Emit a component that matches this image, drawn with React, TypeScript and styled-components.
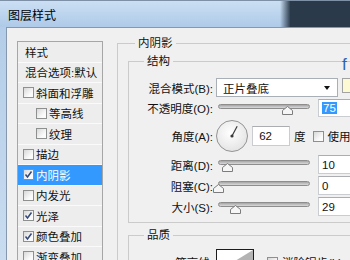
import React from 'react';
import styled, { createGlobalStyle } from 'styled-components';

const Global = createGlobalStyle`
  html, body { margin:0; padding:0; background:#f0f0f0; }
  body {
    font-family: "Liberation Sans", "Noto Sans CJK SC", sans-serif;
    font-size:11.5px; color:#111;
  }
`;

const Win = styled.div`
  width:350px; height:260px; overflow:hidden; background:#f0f0f0;
  display:flex; flex-direction:column;
`;
const TitleBar = styled.div`
  height:27px; flex:none; box-sizing:border-box; padding-left:8px;
  border-top:1px solid #7d90a5;
  background:
    linear-gradient(90deg, rgba(42,58,75,0) 80%, #2a3a4b 83%),
    linear-gradient(#cbdff3, #aecae8);
  display:flex; align-items:center; font-size:12px; color:#000;
`;
const Frame = styled.div`
  flex:1; min-height:0; display:flex;
  background:linear-gradient(#b4cde8, #c9dcf0);
`;
const Body = styled.div`
  flex:1; margin-left:6px; display:flex; align-items:flex-start; gap:14px;
  border-left:1px solid #8598ad; border-top:1px solid #8598ad;
  background:#f0f0f0; padding:7px 0 0 10px;
`;

/* left style list */
const List = styled.div`
  flex:none; width:86px; box-sizing:border-box; margin-top:6px;
  border:1px solid #a6a6a6; background:#ededed;
`;
const Item = styled.div<{ $indent?: boolean; $sel?: boolean }>`
  height:20.5px; box-sizing:border-box; display:flex; align-items:center; gap:2px;
  padding-left:${({ $indent }) => ($indent ? 18 : 5)}px;
  border-bottom:1px solid #fafafa;
  background:${({ $sel }) => ($sel ? '#3399ff' : 'transparent')};
  color:${({ $sel }) => ($sel ? '#fff' : '#111')};
  white-space:nowrap;
`;
const ItemText = styled.span<{ $pad?: number }>`
  padding-left:${({ $pad }) => $pad ?? 0}px;
`;

const Box = styled.span`
  flex:none; width:11px; height:11px; box-sizing:border-box; display:inline-flex;
  border:1px solid #8e8f8f; background:linear-gradient(135deg, #d8d8d8, #fbfbfb 70%);
`;
function Check({ on }: { on?: boolean }) {
  return (
    <Box>
      {on && (
        <svg width="9" height="9" viewBox="0 0 9 9">
          <path d="M1.5 4.5 L3.5 7 L7.5 1.5" fill="none" stroke="#34497a" strokeWidth="1.5" />
        </svg>
      )}
    </Box>
  );
}

/* right group boxes */
const Group = styled.fieldset<{ $w: number; $pl: number; $pt: number; $pb?: number; $mt?: number }>`
  margin:${({ $mt }) => $mt ?? 0}px 0 0 0; flex:none; box-sizing:border-box;
  width:${({ $w }) => $w}px; min-width:0;
  padding:${({ $pt }) => $pt}px 0 ${({ $pb }) => $pb ?? 0}px ${({ $pl }) => $pl}px;
  border:1px solid #cbcbcb;
`;
const Legend = styled.legend<{ $ml: number }>`
  margin-left:${({ $ml }) => $ml}px; padding:0 3px; line-height:16px; font-size:11.5px;
`;
const Rows = styled.div`
  display:flex; flex-direction:column; gap:2px;
`;
const Row = styled.div<{ $h: number }>`
  height:${({ $h }) => $h}px; display:flex; align-items:center; white-space:nowrap;
`;
const Label = styled.span`
  flex:none; width:84px; text-align:right; margin-right:3px;
`;

const Select = styled.div`
  width:122px; height:19px; box-sizing:border-box; flex:none;
  border:1px solid #a9afb7; background:#fff; padding:0 7px 0 6px;
  display:flex; align-items:center; justify-content:space-between;
  &::after {
    content:''; border-left:3.5px solid transparent; border-right:3.5px solid transparent;
    border-top:4px solid #111;
  }
`;
const Swatch = styled.div`
  position:relative; flex:none; align-self:flex-start; margin-left:4px;
  width:20px; height:15px; box-sizing:border-box;
  border:1px solid #a3a3a3; background:#fcf9d3;
`;
const Fx = styled.span`
  position:absolute; left:-1px; top:-24px; line-height:19px;
  font-family:"Liberation Sans", sans-serif; font-size:17px; color:#2f63b5;
`;

const Slider = styled.div`
  position:relative; flex:none; width:92px; height:100%; margin-left:2px;
  display:flex; flex-direction:column; justify-content:center;
`;
const Track = styled.div`
  height:5px; box-sizing:border-box; border-radius:3px; transform:translateY(-2px);
  border:1px solid #8d8d8d; background:linear-gradient(#a5a5a5, #dadada);
`;
const Thumb = styled.svg`
  position:absolute; top:calc(50% - 2px); margin-left:-5.5px;
`;
function Range({ pos }: { pos: number }) {
  return (
    <Slider>
      <Track />
      <Thumb width="11" height="9" viewBox="0 0 11 9" style={{ left: `${pos * 100}%` }}>
        <path d="M5.5 0.5 L10.5 4.5 L10.5 8.5 L0.5 8.5 L0.5 4.5 Z" fill="#f6f6f6" stroke="#7c7c7c" />
      </Thumb>
    </Slider>
  );
}

const Field = styled.div<{ $w: number; $ml: number }>`
  flex:none; width:${({ $w }) => $w}px; height:100%; margin-left:${({ $ml }) => $ml}px;
  box-sizing:border-box; border:1px solid #c9cdd2; border-top-color:#abadb3; background:#fff;
  padding-left:3px; display:flex; align-items:center;
`;
const Picked = styled.span`
  background:#3399ff; color:#fff; padding:0 1px;
`;
const Unit = styled.span<{ $ml: number }>`
  margin-left:${({ $ml }) => $ml}px; display:inline-flex; align-items:center; gap:4px;
`;
const Contour = styled.div`
  flex:none; width:38px; height:24px; box-sizing:border-box; align-self:flex-start;
  border:1px solid #1c1c1c; background:#fff; display:flex;
`;

function Dial() {
  const a = (62 * Math.PI) / 180;
  return (
    <svg width="34" height="34" viewBox="0 0 34 34" style={{ marginLeft: -1, flex: 'none' }}>
      <defs>
        <radialGradient id="dg" cx="45%" cy="40%" r="65%">
          <stop offset="0" stopColor="#ffffff" />
          <stop offset="1" stopColor="#e2e2e2" />
        </radialGradient>
      </defs>
      <circle cx="17" cy="17" r="15.5" fill="url(#dg)" stroke="#949494" />
      <line x1="17" y1="17" x2={17 + 11 * Math.cos(a)} y2={17 - 11 * Math.sin(a)} stroke="#3a3a3a" strokeWidth="1.2" />
      <circle cx="17" cy="17" r="1.6" fill="#3a3a3a" />
    </svg>
  );
}

const styles: { t: string; on?: boolean; indent?: boolean; sel?: boolean }[] = [
  { t: '斜面和浮雕' },
  { t: '等高线', indent: true },
  { t: '纹理', indent: true },
  { t: '描边' },
  { t: '内阴影', on: true, sel: true },
  { t: '内发光' },
  { t: '光泽', on: true },
  { t: '颜色叠加', on: true },
  { t: '渐变叠加' },
];

export default function App() {
  return (
    <Win>
      <Global />
      <TitleBar>图层样式</TitleBar>
      <Frame>
        <Body>
          <List>
            <Item><ItemText $pad={2}>样式</ItemText></Item>
            <Item><ItemText $pad={2}>混合选项:默认</ItemText></Item>
            {styles.map((s) => (
              <Item key={s.t} $indent={s.indent} $sel={s.sel}>
                <Check on={s.on} />
                <ItemText>{s.t}</ItemText>
              </Item>
            ))}
          </List>

          <Group $w={260} $pl={10} $pt={2}>
            <Legend $ml={7}>内阴影</Legend>
            <Group $w={240} $pl={0} $pt={9} $pb={6}>
              <Legend $ml={15}>结构</Legend>
              <Rows>
                <Row $h={19}>
                  <Label>混合模式(B):</Label>
                  <Select>正片叠底</Select>
                  <Swatch><Fx>f</Fx></Swatch>
                </Row>
                <Row $h={18}>
                  <Label>不透明度(O):</Label>
                  <Range pos={0.76} />
                  <Field $w={40} $ml={8}><Picked>75</Picked></Field>
                </Row>
                <Row $h={34}>
                  <Label>角度(A):</Label>
                  <Dial />
                  <Field $w={38} $ml={3} style={{ height: 20 }}>&nbsp;62</Field>
                  <Unit $ml={4}>度</Unit>
                  <Unit $ml={7}><Check />使用全局光(G)</Unit>
                </Row>
                <Row $h={19}>
                  <Label>距离(D):</Label>
                  <Range pos={0.1} />
                  <Field $w={40} $ml={8}>10</Field>
                </Row>
                <Row $h={19}>
                  <Label>阻塞(C):</Label>
                  <Range pos={0.01} />
                  <Field $w={40} $ml={8}>0</Field>
                </Row>
                <Row $h={19}>
                  <Label>大小(S):</Label>
                  <Range pos={0.185} />
                  <Field $w={40} $ml={8}>29</Field>
                </Row>
              </Rows>
            </Group>
            <Group $w={240} $pl={0} $pt={6} $mt={4}>
              <Legend $ml={15}>品质</Legend>
              <Row $h={26}>
                <Label>等高线:</Label>
                <Contour>
                  <svg width="36" height="22" viewBox="0 0 36 22">
                    <path d="M0 22 L36 0 L36 22 Z" fill="#b3b3b3" />
                  </svg>
                </Contour>
                <Unit $ml={13}><Check />消除锯齿(L)</Unit>
              </Row>
            </Group>
          </Group>
        </Body>
      </Frame>
    </Win>
  );
}
